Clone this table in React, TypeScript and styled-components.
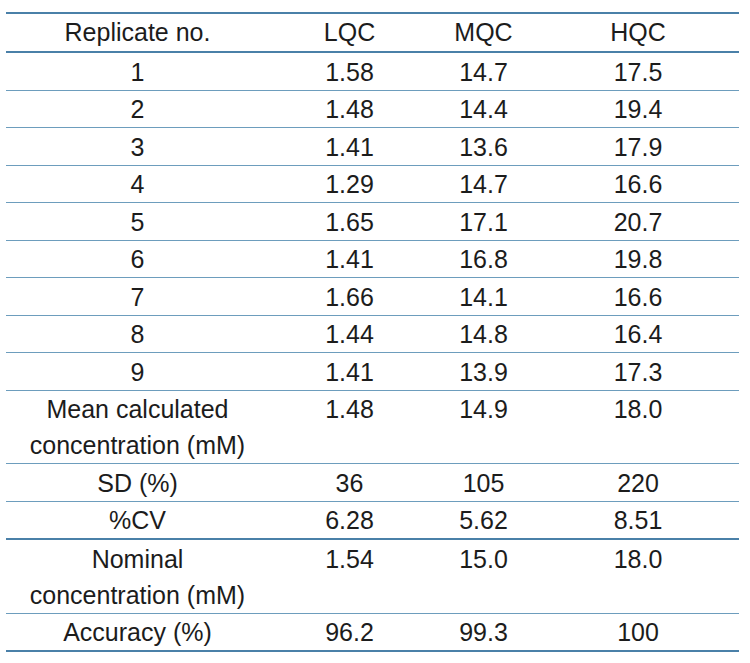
import React from 'react';
import styled, { createGlobalStyle } from 'styled-components';

const GlobalStyle = createGlobalStyle`
  html, body {
    margin: 0;
    padding: 0;
    background: #ffffff;
  }
`;

const Page = styled.div`
  padding: 12px 11px 0 6px;
  font-family: 'Liberation Sans', Arial, sans-serif;
`;

const Table = styled.table`
  width: 733px;
  border-collapse: collapse;
  table-layout: fixed;
  border-top: 2px solid #4a80a8;
  border-bottom: 2px solid #4a80a8;
  color: #1c1c1c;
  font-size: 25px;
`;

const Col = styled.col<{ $w: number }>`
  width: ${(p) => p.$w}px;
`;

const HeadCell = styled.th`
  font-weight: normal;
  text-align: center;
  line-height: 37px;
  padding: 0;
  border-bottom: 2px solid #4a80a8;
`;

const Row = styled.tr<{ $thick?: boolean }>`
  border-bottom: ${(p) => (p.$thick ? '2px solid #4a80a8' : '1px solid #6d9dbd')};
  &:last-child {
    border-bottom: none;
  }
`;

const Cell = styled.td`
  text-align: center;
  vertical-align: top;
  line-height: 36px;
  padding: 0.5px 0 0;
`;

type Item = { label: React.ReactNode; lqc: string; mqc: string; hqc: string; thick?: boolean };

const rows: Item[] = [
  { label: '1', lqc: '1.58', mqc: '14.7', hqc: '17.5' },
  { label: '2', lqc: '1.48', mqc: '14.4', hqc: '19.4' },
  { label: '3', lqc: '1.41', mqc: '13.6', hqc: '17.9' },
  { label: '4', lqc: '1.29', mqc: '14.7', hqc: '16.6' },
  { label: '5', lqc: '1.65', mqc: '17.1', hqc: '20.7' },
  { label: '6', lqc: '1.41', mqc: '16.8', hqc: '19.8' },
  { label: '7', lqc: '1.66', mqc: '14.1', hqc: '16.6' },
  { label: '8', lqc: '1.44', mqc: '14.8', hqc: '16.4' },
  { label: '9', lqc: '1.41', mqc: '13.9', hqc: '17.3' },
  {
    label: (
      <>
        Mean calculated
        <br />
        concentration (mM)
      </>
    ),
    lqc: '1.48',
    mqc: '14.9',
    hqc: '18.0',
  },
  { label: 'SD (%)', lqc: '36', mqc: '105', hqc: '220' },
  { label: '%CV', lqc: '6.28', mqc: '5.62', hqc: '8.51', thick: true },
  {
    label: (
      <>
        Nominal
        <br />
        concentration (mM)
      </>
    ),
    lqc: '1.54',
    mqc: '15.0',
    hqc: '18.0',
  },
  { label: 'Accuracy (%)', lqc: '96.2', mqc: '99.3', hqc: '100' },
];

const App: React.FC = () => {
  return (
    <>
      <GlobalStyle />
      <Page>
        <Table>
          <colgroup>
            <Col $w={263} />
            <Col $w={161} />
            <Col $w={107} />
            <Col $w={202} />
          </colgroup>
          <thead>
            <tr>
              <HeadCell>Replicate no.</HeadCell>
              <HeadCell>LQC</HeadCell>
              <HeadCell>MQC</HeadCell>
              <HeadCell>HQC</HeadCell>
            </tr>
          </thead>
          <tbody>
            {rows.map((r, i) => (
              <Row key={i} $thick={r.thick}>
                <Cell>{r.label}</Cell>
                <Cell>{r.lqc}</Cell>
                <Cell>{r.mqc}</Cell>
                <Cell>{r.hqc}</Cell>
              </Row>
            ))}
          </tbody>
        </Table>
      </Page>
    </>
  );
};

export default App;
